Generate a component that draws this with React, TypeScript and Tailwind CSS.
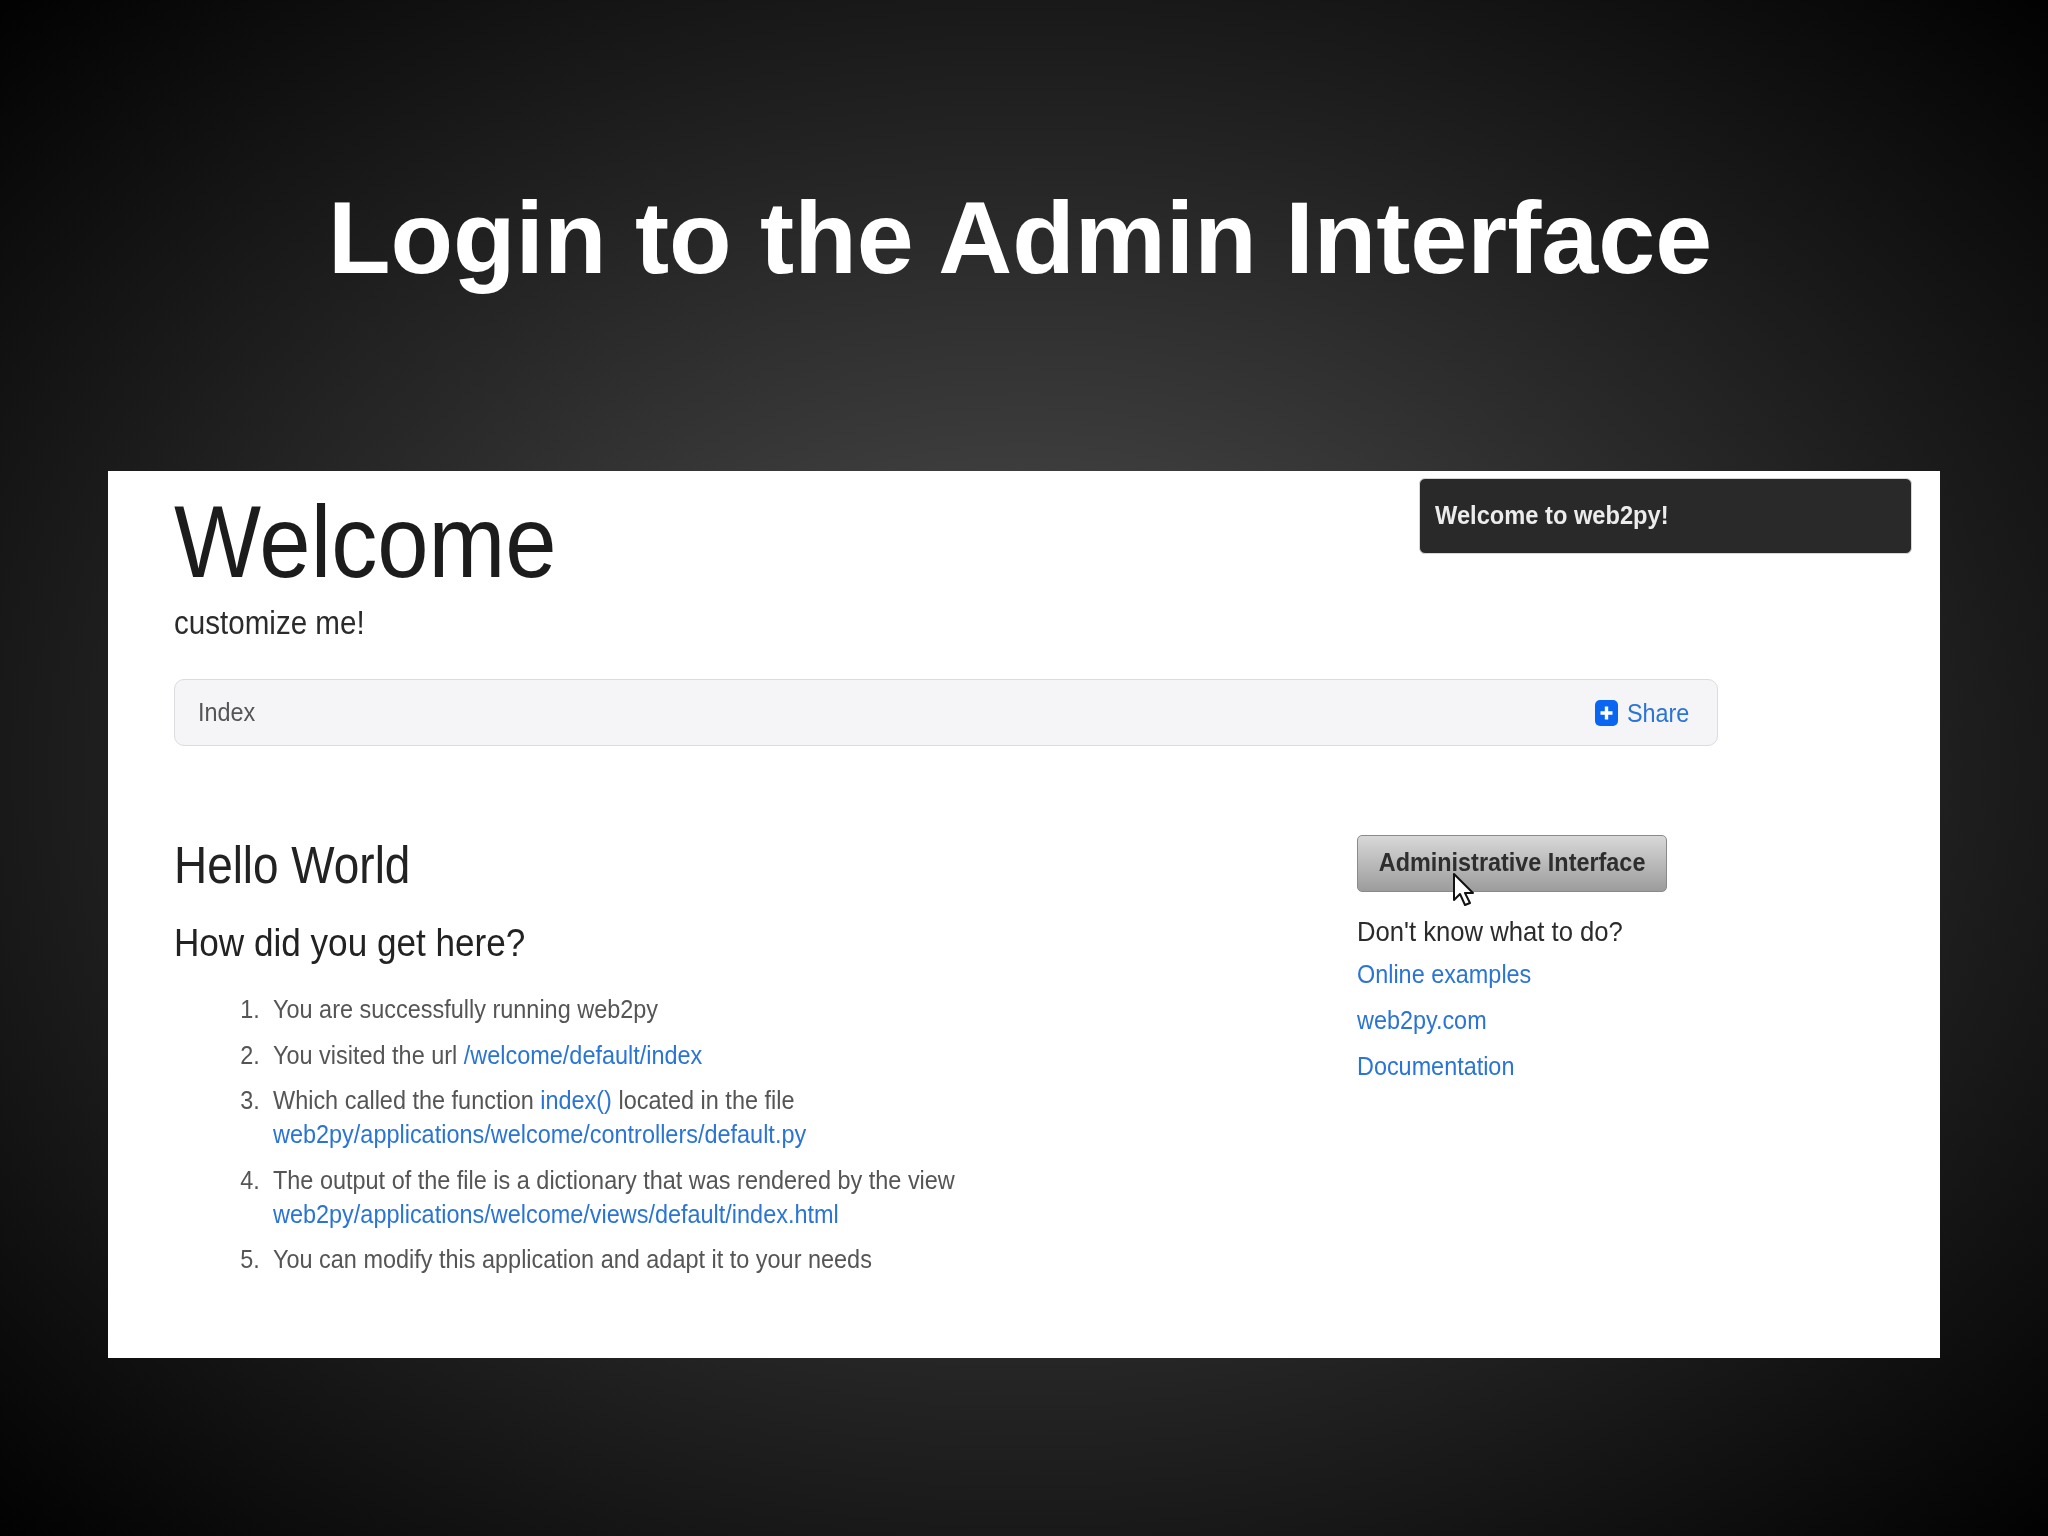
import React from "react";

const link = "text-[#2a74d6]";
const sq = "block origin-left scale-x-[.9]";

const items: React.ReactNode[] = [
  <>You are successfully running web2py</>,
  <>
    You visited the url <span className={link}>/welcome/default/index</span>
  </>,
  <>
    Which called the function <span className={link}>index()</span> located in the file
    <br />
    <span className={link}>web2py/applications/welcome/controllers/default.py</span>
  </>,
  <>
    The output of the file is a dictionary that was rendered by the view
    <br />
    <span className={link}>web2py/applications/welcome/views/default/index.html</span>
  </>,
  <>You can modify this application and adapt it to your needs</>,
];

export default function App() {
  return (
    <div className="w-[2048px] h-[1536px] overflow-hidden flex flex-col bg-[radial-gradient(ellipse_72%_72%_at_50%_50%,#555555_0%,#383838_32%,#1a1a1a_68%,#000000_100%)] font-['Liberation_Sans',Arial,sans-serif]">
      <h1 className="h-[471px] pt-[176px] pr-[8px] text-center text-white font-bold text-[102.4px] leading-[124px]">
        Login to the Admin Interface
      </h1>
      <div className="mx-[108px] h-[887px] bg-white flex flex-col pl-[66px] pr-[28px] blur-[0.5px]">
        <header className="flex justify-between items-start h-[208px]">
          <div>
            <div className="block origin-left scale-x-[.904] text-[102px] leading-[120px] mt-[11px] text-[#1c1c1c]">Welcome</div>
            <div className="block origin-left scale-x-[.91] text-[32.5px] leading-[36px] mt-[3px] text-[#2b2b2b]">customize me!</div>
          </div>
          <div className="mt-[7px] w-[493px] h-[76px] bg-[#292929] border border-[#d6d6d6] rounded-[6px] flex items-center pl-[15px] pb-[2px] text-[#ececec] font-bold text-[26px]">
            <span className="block origin-left scale-x-[.91]">Welcome to web2py!</span>
          </div>
        </header>
        <nav className="w-[1544px] h-[67px] bg-[#f5f5f7] border-[1.5px] border-[#dcdcde] rounded-[10px] flex items-center justify-between pl-[23px] pr-[28px] text-[26px]">
          <span className={`${sq} text-[#555555] -mt-[1px]`}>Index</span>
          <span className="flex items-center gap-[2px]">
            <svg width="23" height="26" viewBox="0 0 23 26" className="mt-[1px]">
              <rect width="23" height="26" rx="5" fill="#0a66f0" />
              <path d="M11.5 6.5v13M5.5 13h12" stroke="#fff" strokeWidth="3.4" />
            </svg>
            <span className={`block origin-right scale-x-[.9] mt-[1px] ${link}`}>Share</span>
          </span>
        </nav>
        <main className="flex mt-[89px]">
          <section className="w-[1183px]">
            <h2 className={`${sq} text-[51px] leading-[54px] mt-[4px] text-[#222222]`}>Hello World</h2>
            <h3 className={`${sq} text-[39px] leading-[42px] mt-[29px] text-[#222222]`}>How did you get here?</h3>
            <ol className="mt-[29px] text-[26px] leading-[33.7px] text-[#555555] flex flex-col gap-[12px]">
              {items.map((item, i) => (
                <li key={i} className="flex">
                  <span className="w-[99px] pr-[13px] shrink-0 flex justify-end">
                    <span className="block origin-right scale-x-[.9]">{i + 1}.</span>
                  </span>
                  <span className="block origin-left scale-x-[.902] whitespace-nowrap">{item}</span>
                </li>
              ))}
            </ol>
          </section>
          <aside className="flex flex-col items-start">
            <div className="relative w-[310px] h-[57px] pb-[2px] rounded-[5px] border border-[#8a8a8a] bg-[linear-gradient(#d8d8d8,#9c9c9c)] flex items-center justify-center text-[#2e2e2e] font-bold text-[26px] whitespace-nowrap">
              <span className="block scale-x-[.9]">Administrative Interface</span>
              <svg width="24" height="36" viewBox="0 0 24 36" className="absolute left-[94px] top-[36px]">
                <path d="M2 2v26l6-6 5 11 5-2-5-10h8z" fill="#fff" stroke="#111" strokeWidth="2" strokeLinejoin="round" />
              </svg>
            </div>
            <div className={`${sq} text-[28.5px] leading-[36px] mt-[21px] text-[#2b2b2b] whitespace-nowrap`}>Don't know what to do?</div>
            <div className={`${sq} text-[26px] leading-[34px] mt-[8px] ${link}`}>Online examples</div>
            <div className={`${sq} text-[26px] leading-[34px] mt-[12px] ${link}`}>web2py.com</div>
            <div className={`${sq} text-[26px] leading-[34px] mt-[12px] ${link}`}>Documentation</div>
          </aside>
        </main>
      </div>
    </div>
  );
}
